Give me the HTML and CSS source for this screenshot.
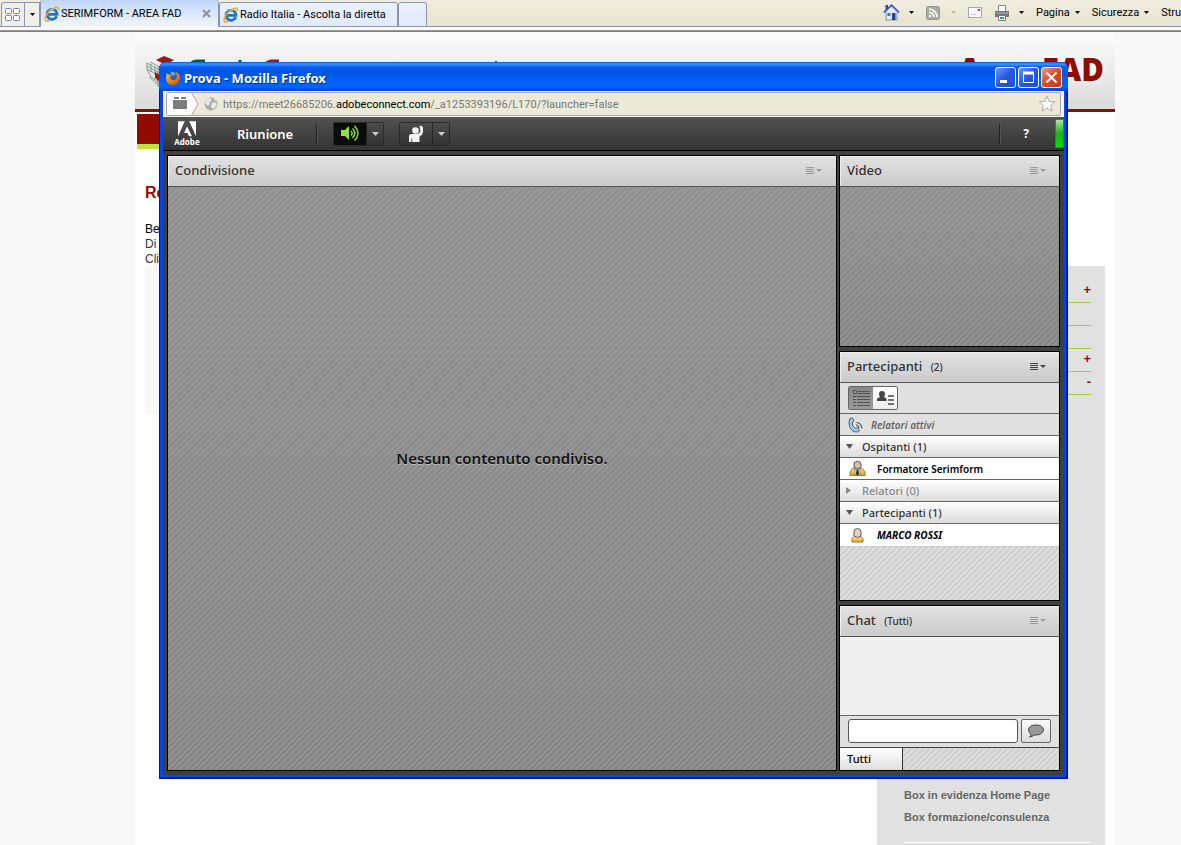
FILE: index.html
```html
<!DOCTYPE html>
<html lang="it">
<head>
<meta charset="utf-8">
<title>SERIMFORM - AREA FAD</title>
<link rel="stylesheet" href="styles.css">
</head>
<body>
<svg width="0" height="0" class="defs" aria-hidden="true">
  <defs>
    <symbol id="ie" viewBox="0 0 16 16">
      <path d="M12.700 10.200A5 5 0 1 1 13 7.600v.7H4" fill="none" stroke="#1c73d0" stroke-width="2.800"/>
      <path d="M5 5.500a5 5 0 0 1 5-1.800" fill="none" stroke="#6cc8fa" stroke-width="1.500"/>
      <path d="M1.800 14.800C-.8 12 4 5.500 9 2.600c3-1.800 6-2 5.500 1.400M1.800 14.800c1 .8 3-.1 4.300-1" fill="none" stroke="#f0b01c" stroke-width="1.600"/>
    </symbol>
    <symbol id="menu" viewBox="0 0 16 8">
      <path d="M0 .5h8M0 2.500h8M0 4.500h8M0 6.500h8" stroke="currentColor"/>
      <path d="M10 2h6l-3 3z" fill="currentColor"/>
    </symbol>
    <symbol id="down" viewBox="0 0 7 4"><path d="M0 0h7L3.500 4z" fill="currentColor"/></symbol>
    <linearGradient id="gold" x1="0" y1="0" x2="0" y2="1"><stop offset="0" stop-color="#fbe08c"/><stop offset="1" stop-color="#e3a51e"/></linearGradient>
    <linearGradient id="fox" x1="0" y1="0" x2="1" y2="1"><stop offset="0" stop-color="#f7c52c"/><stop offset="1" stop-color="#d8420c"/></linearGradient>
  </defs>
</svg>

<header class="browser">
  <nav class="tabs" aria-label="Schede">
    <button class="quick" aria-label="Schede rapide"><svg width="16" height="14" viewBox="0 0 16 14"><g fill="#fff" stroke="#7880a0"><rect x=".5" y=".5" width="6" height="5" rx="1"/><rect x="8.500" y=".5" width="6" height="5" rx="1"/><rect x=".5" y="7.500" width="6" height="5" rx="1"/><rect x="8.500" y="7.500" width="6" height="5" rx="1"/></g></svg></button>
    <button class="quick-arrow" aria-label="Elenco schede"><svg width="5" height="3" viewBox="0 0 7 4"><use href="#down"/></svg></button>
    <button class="tab active"><svg width="16" height="16"><use href="#ie"/></svg><span>SERIMFORM - AREA FAD</span><svg class="close" width="9" height="9" viewBox="0 0 9 9"><path d="M1 1l7 7M8 1L1 8" stroke="#8f8f92" stroke-width="2"/></svg></button>
    <button class="tab"><svg width="16" height="16"><use href="#ie"/></svg><span>Radio Italia - Ascolta la diretta</span></button>
    <button class="tab new" aria-label="Nuova scheda"></button>
  </nav>
  <div class="tools">
    <button class="tool" aria-label="Pagina iniziale"><svg width="17" height="17" viewBox="0 0 17 17"><path d="M3 7.500L8.500 2 14 7.500V16H3z" fill="#e4ebf6" stroke="#7e90b4"/><path d="M.8 8.500L8.500 1l7.700 7.500" fill="none" stroke="#3156c4" stroke-width="1.600"/><path d="M2.500 1h2.500v3l-2.500 2z" fill="#3046b8"/><path d="M9 9h3.500v7H9z" fill="#1f4490"/><path d="M4.500 9h3v3h-3z" fill="#52719c"/></svg><svg class="gap8" width="5" height="3" viewBox="0 0 7 4"><use href="#down"/></svg></button>
    <button class="tool pale" aria-label="Feed"><svg width="14" height="14" viewBox="0 0 14 14"><rect x=".5" y=".5" width="13" height="13" rx="2" fill="#aaa99f" stroke="#95948a"/><circle cx="4" cy="10" r="1.300" fill="#fff"/><path d="M3 6.200A4.700 4.700 0 0 1 7.800 11M3 3a8 8 0 0 1 8 8" fill="none" stroke="#fff" stroke-width="1.600"/></svg><svg class="gap11" width="5" height="3" viewBox="0 0 7 4"><use href="#down"/></svg></button>
    <button class="tool" aria-label="Posta"><svg width="14" height="11" viewBox="0 0 14 11"><rect x=".5" y=".5" width="13" height="10" fill="#fafafc" stroke="#a6a8b8"/><path d="M10 2h2v2h-2z" fill="#e03030"/><path d="M3 7.500h5" stroke="#c4c4d0"/></svg></button>
    <button class="tool" aria-label="Stampa"><svg width="16" height="16" viewBox="0 0 16 16"><path d="M4.500.5h7v6h-7z" fill="#fff" stroke="#888"/><path d="M1 6h14v6H1z" fill="#74767c"/><path d="M2 8h12" stroke="#b9bac0"/><path d="M4.500 10.500h7v5h-7z" fill="#fff" stroke="#777"/><path d="M6 13h2.500" stroke="#23a24c" stroke-width="2"/><path d="M8.500 13H10" stroke="#2b6de0" stroke-width="2"/></svg><svg class="gap8" width="5" height="3" viewBox="0 0 7 4"><use href="#down"/></svg></button>
    <button class="tool">Pagina<svg class="gap5" width="5" height="3" viewBox="0 0 7 4"><use href="#down"/></svg></button>
    <button class="tool">Sicurezza<svg class="gap5" width="5" height="3" viewBox="0 0 7 4"><use href="#down"/></svg></button>
    <button class="tool">Strumenti</button>
  </div>
</header>

<div class="page">
  <header class="site-head">
    <svg class="cube" width="42" height="42" viewBox="0 0 42 42" fill="none"><path d="M1 8l14 8v6L1 14zM1 14l4 8 12 8M3 22l14 12M15 16l10-5M4 7l12 6M1 11l14 8M5 9v8M9 11v9M12 12v20" stroke="#7e9a8c"/><path d="M10 5l8-4 10 4-8 5z" fill="#a01910"/><path d="M9 17l5 3v7l-5-4z" fill="#a01910"/></svg>
    <svg class="brand" width="330" height="24" viewBox="0 0 330 24" fill="none" stroke-width="3"><path d="M2 8q1-6 7-6h8M3 11q5 3 12 4M25 7q4-3 8 0M38 6h8M52 1v2M52 6v14M58 6h8M69 6h6" stroke="#0c5a3a"/><path d="M78 20V7q0-5 6-5h7M95 7q4-4 8 0M107 6h7M117 20V7q4-3 8 0 4-3 8 0v13" stroke="#a01910"/><path d="M202 5l4-1v14M222 6h4M248 6h5M261 3v2M282 6h4M308 2v16M320 3v2M325 4v14" stroke="#0c5a3a" stroke-width="2"/></svg>
    <strong class="area">Area FAD</strong>
  </header>
  <div class="site-nav"></div>
  <div class="content">
    <main class="lesson">
      <h1>Re</h1>
      <p><b>Be</b><br>Di<br>Cli</p>
      <div class="box"></div>
    </main>
    <aside class="side">
      <ul class="tree">
        <li>+</li><li></li><li></li><li>+</li><li>-</li>
      </ul>
      <div class="side-links">
        <a href="#">Box in evidenza Home Page</a>
        <a href="#">Box formazione/consulenza</a>
      </div>
    </aside>
  </div>
</div>

<section class="window" aria-label="Prova - Mozilla Firefox">
  <header class="title">
    <svg width="16" height="16" viewBox="0 0 16 16"><circle cx="8" cy="7.500" r="6.500" fill="#2a5fb4"/><path d="M6 2q4-.5 4.500 2L8 6 6 4z" fill="#62b4ea"/><path d="M1.800 3Q3 4.500 6.500 5.500L5 7.500q1 3 4.500 2.500 3-1.500 2-5.500l-.5-2.500q4.500 2 4 6.500-1 6-7 6.500-6.500-.5-7-6.500Q1 5 1.800 3z" fill="url(#fox)"/></svg>
    <h2>Prova - Mozilla Firefox</h2>
    <button class="wbtn" aria-label="Riduci"><svg width="19" height="19" viewBox="0 0 19 19"><path d="M4 13.500h7" stroke="#fff" stroke-width="3"/></svg></button>
    <button class="wbtn" aria-label="Ingrandisci"><svg width="19" height="19" viewBox="0 0 19 19"><path d="M4.500 5h10v9.500h-10z" fill="none" stroke="#fff"/><path d="M4 5h11" stroke="#fff" stroke-width="3"/></svg></button>
    <button class="wbtn red" aria-label="Chiudi"><svg width="19" height="19" viewBox="0 0 19 19"><path d="M4.500 4.500l10 10M14.500 4.500l-10 10" stroke="#fff" stroke-width="2.200"/></svg></button>
  </header>
  <div class="url-row">
    <div class="url">
      <svg class="ident" width="32" height="24" viewBox="0 0 32 24"><path d="M0 0h24l7 12-7 12H0z" fill="#fff"/><path d="M24 0l7 12-7 12" fill="none" stroke="#aaa797"/><path d="M6 8h14v9H6zM7 5h5v2H7zM14 5h5v2h-5z" fill="#7d7d7d"/></svg>
      <svg width="14" height="14" viewBox="0 0 14 14"><circle cx="7" cy="7" r="6.500" fill="#aaa"/><path d="M2 3l3-2 3 1-1 2-2 1 1 2-2 2-3-3zM8 6l3-1 2 2-2 4-3 1-1-3zM10 1l2 2-2 1z" fill="#e9e9e9"/></svg>
      <span class="address">https://meet26685206.<b>adobeconnect.com</b>/_a1253393196/L170/?launcher=false</span>
      <svg class="star" width="18" height="18" viewBox="0 0 18 18"><path d="M9 1.200l2.200 5.200 5.600.4-4.200 3.700 1.400 5.700L9 13.200l-5 3 1.400-5.700L1.200 6.800l5.600-.4z" fill="#fafafa" stroke="#adada8"/></svg>
    </div>
  </div>
  <div class="appbar">
    <div class="adobe"><svg width="18" height="16" viewBox="0 0 20 17"><path d="M0 0h7.500L0 16.500zM12.500 0H20v16.500zM10 5.500l5.500 11h-3.300l-1.600-3.600H6.800z" fill="#fff"/></svg><span>Adobe</span></div>
    <button class="meeting">Riunione</button>
    <i class="sep"></i>
    <div class="split">
      <button class="on" aria-label="Altoparlante"><svg width="18" height="17" viewBox="0 0 18 17"><path d="M0 5h4l4-4v14l-4-4H0z" fill="#92e23b"/><path d="M10 6c1.500 1.500 1.500 3 0 4.500M11.500 3.500c3 3 3 6.500 0 9.500M13.500 1c4.500 4.500 4.500 10 0 14.500" fill="none" stroke="#8ad63a" stroke-width="1.500"/></svg></button>
      <button class="more" aria-label="Opzioni altoparlante"><svg width="7" height="4" viewBox="0 0 7 4"><use href="#down"/></svg></button>
    </div>
    <div class="split">
      <button aria-label="Alza la mano"><svg width="17" height="17" viewBox="0 0 17 17" fill="#f2f2f2"><circle cx="7.500" cy="5.500" r="3.300"/><path d="M1 17v-5.500Q1 9 3.500 9H9q3.500-.5 3.300-4L11.500 1.500 13 .5l2 1.500V6q0 4-3.500 5.500V17H4.200v-3.500h-.8V17z"/></svg></button>
      <button class="more" aria-label="Cambia stato"><svg width="7" height="4" viewBox="0 0 7 4"><use href="#down"/></svg></button>
    </div>
    <i class="sep right"></i>
    <button class="help">?</button>
    <i class="signal"></i>
  </div>
  <div class="pods">
    <section class="pod share">
      <header class="pod-head faded"><h3>Condivisione</h3><button aria-label="Opzioni Condivisione"><svg width="16" height="8"><use href="#menu"/></svg></button></header>
      <div class="dark empty"><p>Nessun contenuto condiviso.</p></div>
    </section>
    <div class="rail">
      <section class="pod">
        <header class="pod-head faded"><h3>Video</h3><button aria-label="Opzioni Video"><svg width="16" height="8"><use href="#menu"/></svg></button></header>
        <div class="dark"></div>
      </section>
      <section class="pod">
        <header class="pod-head"><h3>Partecipanti <small>(2)</small></h3><button aria-label="Opzioni Partecipanti"><svg width="16" height="8"><use href="#menu"/></svg></button></header>
        <div class="views">
          <div class="toggle">
            <button class="pressed" aria-label="Elenco"><svg width="17" height="16" viewBox="0 0 17 16" stroke="#505050"><path d="M.5.5h3v3h-3z" fill="#999"/><path d="M5 1.500h12M5 3.500h12M0 6.500h3M4 6.500h13M0 9.500h3M4 9.500h13M0 12.500h3M4 12.500h13M0 15.500h3M4 15.500h13"/></svg></button>
            <button aria-label="Stato"><svg width="17" height="16" viewBox="0 0 17 16"><path d="M5 1q3 0 3 3 0 2-1 3l2.500 1.500V11h-9.500V8.500L3 7Q2 6 2 4q0-3 3-3z" fill="#444"/><path d="M11 6h6M11 10h6M11 14h6" stroke="#444" stroke-width="1.500"/></svg></button>
          </div>
        </div>
        <div class="speakers"><svg width="16" height="16" viewBox="0 0 16 16"><path d="M2 1.500L4.500 1 6 4 4 6q.5 4 3.500 5.500l2-1 2 3-2 1.500Q4 15.500 1.500 9.500.2 4 2 1.500z" fill="#a7c9e0" stroke="#3f647e"/><path d="M8 8q2.500.3 3 3M8.500 5.500q5 .5 5.500 6" fill="none" stroke="#555" stroke-width="1.200"/></svg><em>Relatori attivi</em></div>
        <div class="group"><svg width="7" height="5" viewBox="0 0 7 5"><path d="M0 0h7L3.500 5z" fill="#555"/></svg>Ospitanti (1)</div>
        <div class="person"><svg width="17" height="17" viewBox="0 0 17 17"><path d="M1 15.500V12l3-4h9l3 4v3.500z" fill="url(#gold)" stroke="#a67622"/><path d="M6 9l2.500 2L11 9v5.500H6z" fill="#fff" stroke="#777" stroke-width=".8"/><circle cx="8.500" cy="5" r="3.700" fill="#ccc5bb" stroke="#55504a"/><path d="M7.800 9.500h1.400l1 4-1.700 2-1.700-2z" fill="#333"/></svg><b>Formatore Serimform</b></div>
        <div class="group off"><svg width="5" height="7" viewBox="0 0 5 7"><path d="M0 0l5 3.500L0 7z" fill="currentColor"/></svg>Relatori (0)</div>
        <div class="group"><svg width="7" height="5" viewBox="0 0 7 5"><path d="M0 0h7L3.500 5z" fill="#555"/></svg>Partecipanti (1)</div>
        <div class="person last"><svg width="17" height="17" viewBox="0 0 17 17"><path d="M3 15V11.500l2-2h7l2 2V15z" fill="url(#gold)" stroke="#a67622"/><path d="M5 5q0-3.500 3.500-3.500T12 5v4q-3.500 3-7 0z" fill="#ddd2c5" stroke="#645c55"/></svg><b>MARCO ROSSI</b></div>
        <div class="light"></div>
      </section>
      <section class="pod">
        <header class="pod-head faded"><h3>Chat <small>(Tutti)</small></h3><button aria-label="Opzioni Chat"><svg width="16" height="8"><use href="#menu"/></svg></button></header>
        <div class="log"></div>
        <form class="compose"><input type="text" aria-label="Messaggio"><button type="button" aria-label="Invia"><svg width="18" height="14" viewBox="0 0 18 14"><path d="M9 1c4.500 0 7.500 2 7.500 4.800S13.500 11 9 11q-1 0-2 0-1.500 1.800-4.500 2 1.700-1.300 1.500-3Q1.500 8.500 1.500 5.800C1.500 3 4.500 1 9 1z" fill="#999" stroke="#444"/></svg></button></form>
        <div class="rooms"><button>Tutti</button><div class="light"></div></div>
      </section>
    </div>
  </div>
</section>
</body>
</html>
```
FILE: styles.css
```css
* { box-sizing: border-box; }
html, body { height: 100%; }
body {
  margin: 0;
  display: flex;
  flex-direction: column;
  overflow: hidden;
  position: relative;
  background: #f8f8f8;
  font-family: "Liberation Sans", Arial, sans-serif;
}
h1, h2, h3, p, ul { margin: 0; padding: 0; }
button { font: inherit; color: inherit; padding: 0; border: 0; background: none; }
svg { flex: none; display: block; }
.defs { position: absolute; }

/* browser chrome */
.browser {
  flex: none;
  height: 32px;
  display: flex;
  background: linear-gradient(#f0eddf, #e8e4cf 26px, #8a8fa6 26px, #8a8fa6 27px, #f4f7fc 27px, #f4f7fc 30px, #aca899 30px, #716f64);
  font: 11px Roboto, sans-serif;
}
.tabs { display: flex; align-items: flex-end; height: 27px; padding-left: 1px; }
.tabs button { border: 1px solid #9094a8; background: linear-gradient(#e9f1fb, #dfeafa); display: flex; align-items: center; }
.tabs .quick { width: 24px; height: 25px; justify-content: center; border-radius: 3px 0 0 0; background: #f0f0ea; }
.tabs .quick-arrow { width: 15px; height: 25px; justify-content: center; border-left: 0; background: #f0f0ea; }
.tab { width: 179px; height: 25px; padding: 0 4px 0 3px; gap: 1px; border-radius: 3px 3px 0 0; white-space: nowrap; }
.tabs .tab.active { height: 27px; background: linear-gradient(#bfd7f8, #f4f7fc); border-bottom: 0; border-top: 0; }
.close { margin: 0 3px 0 auto; }
.tab.new { width: 29px; }
.tools { width: 298px; margin-left: auto; height: 25px; display: flex; align-items: center; overflow: hidden; white-space: nowrap; }
.tool { display: flex; align-items: center; margin-right: 12px; flex: none; }
.tool.pale { color: #bbb8a8; }
.gap5 { margin-left: 5px; }
.gap8 { margin-left: 9px; }
.gap11 { margin-left: 11px; }

/* site behind the window */
.page { flex: 1; margin: 0 66px 0 135px; background: #fff; display: flex; flex-direction: column; min-height: 0; }
.site-head { flex: none; height: 80px; display: flex; padding: 0 11px; background: linear-gradient(#fcfcfc, #dadada); border-bottom: 3px solid #920b00; }
.cube { margin-top: 23px; }
.brand { margin-top: 27px; }
.area { margin-left: auto; margin-top: 17px; font: 800 31px/40px "Open Sans", sans-serif; color: #920b00; text-shadow: 0 0 5px #fff, 0 0 5px #fff; }
.site-nav { flex: none; height: 35px; margin: 2px 200px 0 2px; background: #920b00; border-bottom: 5px solid #bfe23f; }
.content { flex: 1; display: grid; grid-template-columns: 1fr 228px; padding: 0 10px; min-height: 0; }
.lesson { padding-top: 34px; font-size: 12px; line-height: 15px; color: #333; }
.lesson h1 { font-size: 16px; line-height: 20px; color: #920b00; margin-bottom: 19px; }
.lesson b { font-weight: normal; color: #000; }
.box { height: 147px; background: #f8f8f8; }
.side { margin-top: 117px; padding: 14px 14px 0 27px; background: #e1e1e1; display: flex; flex-direction: column; justify-content: space-between; }
.tree { list-style: none; color: #920b00; font: 900 13px/20px "Liberation Sans", sans-serif; text-align: right; }
.tree li { height: 23px; border-bottom: 1px solid #a7c93f; }
.side-links { height: 61px; border-bottom: 2px solid #e1e1e1; box-shadow: inset 0 -1px #fff; }
.side-links a { display: block; font: bold 11px/22px "Liberation Sans", sans-serif; color: #666; text-decoration: none; white-space: nowrap; }

/* Firefox window */
.window {
  position: absolute;
  inset: 62px 113px 66px 159px;
  display: flex;
  flex-direction: column;
  padding: 0 4px 4px;
  border-radius: 7px 7px 0 0;
  background: #0646e4;
  box-shadow: inset 1px 0 #0018b0, inset -1px 0 #00109c, inset -2px 0 #0424c0, inset 0 -1px #00109c, inset 0 -2px #0424c0;
}
.title {
  flex: none;
  height: 29px;
  margin: 0 -4px;
  padding: 2px 6px 0;
  display: flex;
  align-items: center;
  border-radius: 7px 7px 0 0;
  background: linear-gradient(#0a58d8, #3d95ff 2px, #0a5df0 5px, #0054e3 10px, #0061fb 20px, #0066ff 25px, #0040c8);
  color: #fff;
}
.title h2 { margin: 0 auto 0 3px; font: bold 13px "Noto Sans", sans-serif; text-shadow: 1px 1px #0a2a80; }
.wbtn { width: 21px; height: 21px; margin-left: 2px; border: 1px solid #fff; border-radius: 3px; background: linear-gradient(135deg, #6c98f4, #2458dc 50%, #1c50e0); }
.wbtn.red { background: linear-gradient(135deg, #f09a80, #dc4a24 50%, #c83a10); }
.url-row { flex: none; height: 26px; padding: 1px 3px; background: #f6f4ea; }
.url { height: 24px; display: flex; align-items: center; border: 1px solid #aaa797; border-radius: 2px; background: #ece9d8; overflow: hidden; }
.ident { margin-right: 5px; }
.address { margin-left: 5px; font: 11px Roboto, sans-serif; color: #777; }
.address b { font-weight: normal; color: #000; }
.star { margin: 0 4px 0 auto; }

/* meeting toolbar */
.appbar {
  flex: none;
  height: 34px;
  display: flex;
  align-items: center;
  background: linear-gradient(#525252, #343434);
  border-bottom: 1px solid #000;
  color: #fff;
  font-family: "Noto Sans", sans-serif;
}
.adobe { width: 48px; display: flex; flex-direction: column; align-items: center; font: bold 8px/10px "Noto Sans", sans-serif; }
.meeting { margin-left: 26px; font-size: 13px; font-weight: 600; }
.sep { width: 2px; height: 20px; margin-left: 23px; border-left: 1px solid #222; border-right: 1px solid #555; }
.split { display: flex; margin-left: 15px; height: 24px; border: 1px solid #2a2a2a; border-radius: 2px; }
.split button { width: 32px; display: grid; place-items: center; background: linear-gradient(#4c4c4c, #343434); }
.split .on { background: #0c0c0c; }
.split .more { width: 17px; border-left: 1px solid #252525; color: #ccc; }
.sep.right { margin-left: auto; }
.help { width: 50px; font-size: 12px; font-weight: bold; }
.signal { width: 9px; height: 29px; margin-left: 4px; border: 1px solid #149a14; background: linear-gradient(#a8e6a0, #18b418 50%, #04e204); }

/* pods */
.pods { flex: 1; min-height: 0; display: grid; grid-template-columns: 1fr 221px; gap: 2px; padding: 4px; background: #404040; font-family: "Noto Sans", sans-serif; color: #333; }
.rail { display: grid; grid-template-rows: 192fr 250fr 166fr; gap: 4px; min-height: 0; }
.pod { min-height: 0; display: flex; flex-direction: column; border: 1px solid #000; background: #e0e0e0; overflow: hidden; }
.pod-head { flex: none; height: 31px; padding: 0 13px 0 7px; display: flex; align-items: center; justify-content: space-between; background: linear-gradient(#e2e2e2, #cacaca); border-bottom: 1px solid #555; box-shadow: inset 1px 1px #eee; }
.share .pod-head { padding-right: 14px; }
.pod-head h3 { font-size: 13px; font-weight: 500; line-height: 20px; padding-bottom: 2px; }
.pod-head small { font-size: 10px; margin-left: 5px; }
.pod-head button { color: #444; }
.pod-head.faded button { color: #999; }
.dark {
  flex: 1;
  background: linear-gradient(135deg, transparent 46%, #a4a4a4 46%, #a4a4a4 54%, transparent 54%) 0 0 / 6px 6px, linear-gradient(#919191, #868686);
}
.empty { display: grid; place-items: center; }
.empty p { font-size: 15px; font-weight: 600; line-height: 20px; color: #111; text-shadow: 0 1px #bbb; margin-bottom: 42px; }
.light {
  flex: 1;
  background: linear-gradient(135deg, transparent 46%, #f0f0f0 46%, #f0f0f0 54%, transparent 54%) 0 0 / 6px 6px, #d2d2d2;
}
.views { flex: none; height: 31px; padding: 3px 8px; border-bottom: 1px solid #666; }
.toggle { width: 50px; height: 24px; display: flex; border: 1px solid #666; border-radius: 2px; overflow: hidden; }
.toggle button { flex: 1; display: grid; place-items: center; background: linear-gradient(#fff, #eee); }
.toggle .pressed { background: linear-gradient(#888, #9a9a9a); }
.speakers, .group, .person { flex: none; height: 22px; display: flex; align-items: center; border-bottom: 1px solid #666; padding-left: 8px; }
.speakers em { margin-left: 7px; font-size: 10px; font-weight: 600; color: #666; }
.group { padding-left: 6px; gap: 9px; font-size: 11px; font-weight: 500; background: linear-gradient(#fff, #dcdcdc); }
.group.off { color: #888; gap: 11px; }
.person { background: #fff; color: #000; font-size: 10px; gap: 11px; padding-left: 9px; }
.person b { font-weight: 600; }
.person.last { height: 23px; border-color: #ccc; }
.person.last b { font-style: italic; font-weight: bold; }
.log { flex: 1; background: #efefef; }
.compose { flex: none; height: 33px; padding: 3px 8px 5px; display: flex; gap: 3px; border-top: 1px solid #666; border-bottom: 1px solid #444; }
.compose input { flex: 1; min-width: 0; height: 24px; border: 1px solid #555; border-radius: 3px; background: #fff; font: 12px "Noto Sans", sans-serif; }
.compose button { width: 30px; height: 24px; display: grid; place-items: center; border: 1px solid #666; border-radius: 2px; background: linear-gradient(#fafafa, #ddd); }
.rooms { flex: none; height: 22px; display: flex; }
.rooms button { width: 63px; padding: 0 0 2px 7px; text-align: left; border-right: 1px solid #333; background: linear-gradient(#fff, #e0e0e0); color: #000; font-size: 11px; font-weight: 500; }
```
